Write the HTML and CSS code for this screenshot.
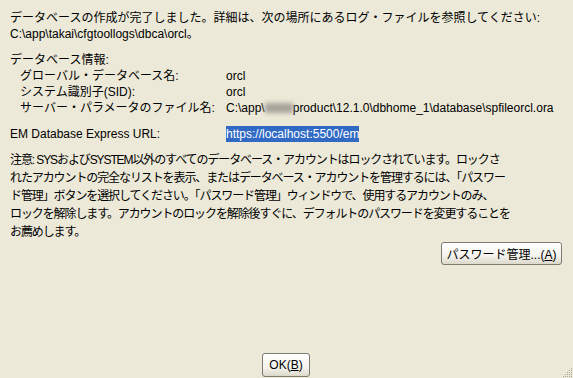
FILE: index.html
```html
<!DOCTYPE html>
<html lang="ja">
<head>
    <meta charset="UTF-8">
    <title>Database Configuration Assistant</title>
    <link rel="stylesheet" href="styles.css">
</head>
<body>
    <div class="dialog">
        <p class="intro">データベースの作成が完了しました。詳細は、次の場所にあるログ・ファイルを参照してください:<br>C:\app\takai\cfgtoollogs\dbca\orcl。</p>

        <div class="info">
            <div class="info-title">データベース情報:</div>
            <div class="info-grid">
                <span>グローバル・データベース名:</span><span>orcl</span>
                <span>システム識別子(SID):</span><span>orcl</span>
                <span>サーバー・パラメータのファイル名:</span><span>C:\app\<span class="blur"></span>product\12.1.0\dbhome_1\database\spfileorcl.ora</span>
            </div>
        </div>

        <div class="em-row">
            <span class="em-label">EM Database Express URL:</span>
            <span class="em-url">https://localhost:5500/em</span>
        </div>

        <p class="note">注意: SYSおよびSYSTEM以外のすべてのデータベース・アカウントはロックされています。ロックさ<br>れたアカウントの完全なリストを表示、またはデータベース・アカウントを管理するには、「パスワー<br>ド管理」ボタンを選択してください。「パスワード管理」ウィンドウで、使用するアカウントのみ、<br>ロックを解除します。アカウントのロックを解除後すぐに、デフォルトのパスワードを変更することを<br>お薦めします。</p>

        <div class="actions">
            <button class="btn btn-pass">パスワード管理...(<u>A</u>)</button>
        </div>

        <div class="footer">
            <button class="btn btn-ok">OK(<u>B</u>)</button>
        </div>

        <svg class="grip" width="12" height="12" viewBox="0 0 12 12">
            <g fill="#a9a594">
                <rect x="10" y="2" width="1" height="1"/><rect x="8" y="4" width="1" height="1"/><rect x="10" y="4" width="1" height="1"/>
                <rect x="6" y="6" width="1" height="1"/><rect x="8" y="6" width="1" height="1"/><rect x="10" y="6" width="1" height="1"/>
                <rect x="4" y="8" width="1" height="1"/><rect x="6" y="8" width="1" height="1"/><rect x="8" y="8" width="1" height="1"/><rect x="10" y="8" width="1" height="1"/>
                <rect x="2" y="10" width="1" height="1"/><rect x="4" y="10" width="1" height="1"/><rect x="6" y="10" width="1" height="1"/><rect x="8" y="10" width="1" height="1"/><rect x="10" y="10" width="1" height="1"/>
            </g>
        </svg>
    </div>
</body>
</html>
```

FILE: styles.css
```css
html, body {
    margin: 0;
    height: 100%;
}
body {
    background: #ece9d8;
    color: #000;
    font-family: "Liberation Sans", "Noto Sans CJK JP", sans-serif;
    font-size: 12px;
    line-height: 16px;
    overflow: hidden;
}
.dialog {
    position: relative;
    height: 100%;
    box-sizing: border-box;
    padding: 10px 11px 1px 10px;
    display: flex;
    flex-direction: column;
}
p {
    margin: 0;
}
.intro {
    white-space: nowrap;
}
.info {
    margin-top: 10px;
}
.info-grid {
    display: grid;
    grid-template-columns: 206px auto;
    padding-left: 10px;
}
.blur {
    display: inline-block;
    width: 28px;
    height: 10px;
    vertical-align: -1px;
    background: #a8a49c;
    filter: blur(2px);
}
.em-row {
    margin-top: 10px;
    display: grid;
    grid-template-columns: 216px auto;
}
.em-url {
    justify-self: start;
    background: #316ac5;
    color: #fff;
}
.note {
    margin-top: 9px;
    line-height: 18px;
    letter-spacing: -1.1px;
    white-space: nowrap;
}
.actions {
    display: flex;
    justify-content: flex-end;
    margin-top: 1px;
}
.footer {
    margin-top: auto;
    display: flex;
    justify-content: center;
}
.btn {
    font-family: inherit;
    font-size: 12px;
    color: #000;
    border: 1px solid #7b7b72;
    border-radius: 3px;
    background: linear-gradient(#ffffff, #f4f3ee 60%, #dcd8ca);
    padding: 0;
}
.btn u {
    text-underline-offset: 1px;
}
.btn-pass {
    width: 121px;
    height: 23px;
}
.btn-ok {
    width: 48px;
    height: 24px;
}
.grip {
    position: absolute;
    right: 0;
    bottom: 0;
}
```
